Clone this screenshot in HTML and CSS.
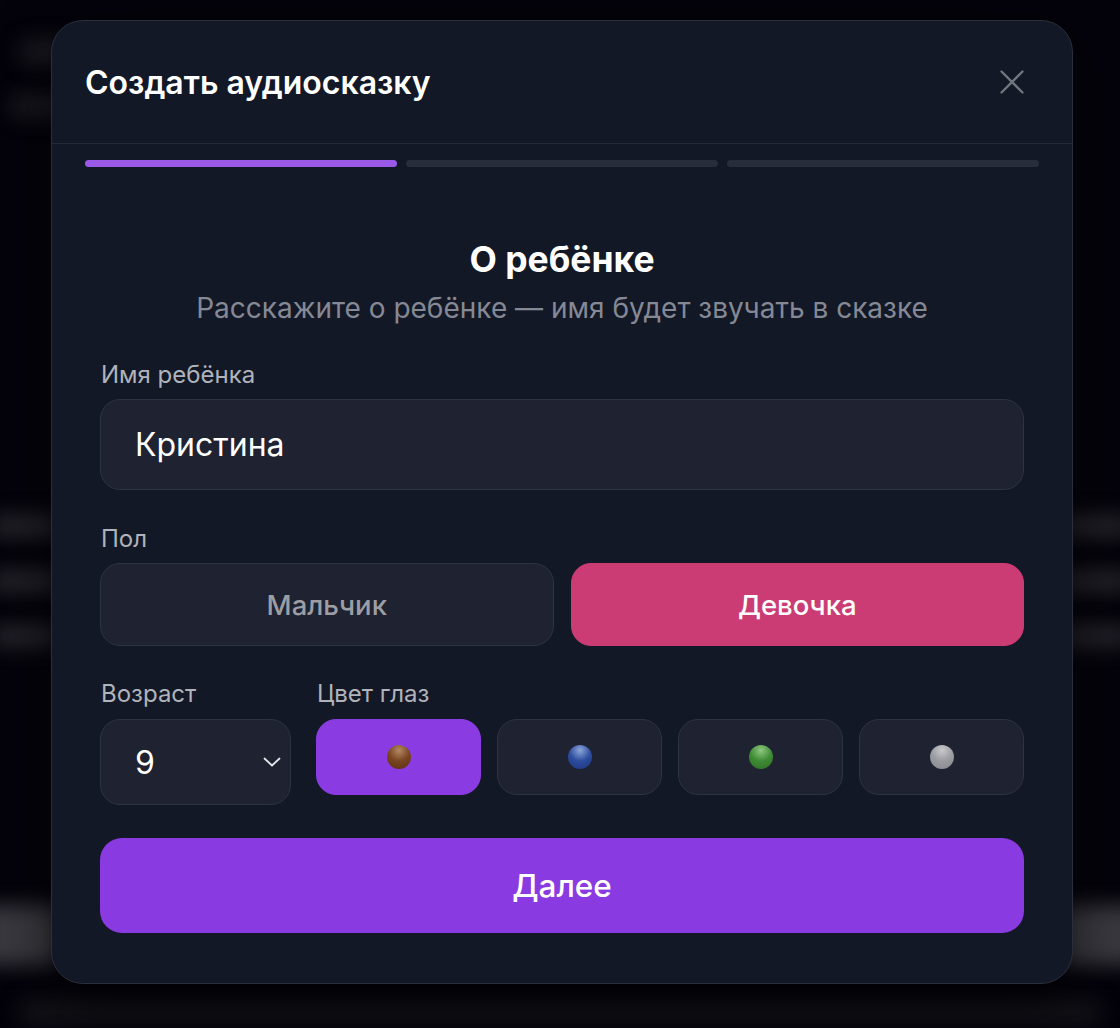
FILE: index.html
```html
<!DOCTYPE html>
<html lang="ru">
<head>
<meta charset="utf-8">
<title>Создать аудиосказку</title>
<link rel="stylesheet" href="styles.css">
</head>
<body>
<div class="backdrop" aria-hidden="true">
  <span class="blob b1"></span>
  <span class="blob b2"></span>
  <span class="blob b3"></span>
  <span class="blob b4"></span>
  <span class="blob b5"></span>
  <span class="blob b6"></span>
  <span class="blob b7"></span>
  <span class="blob b8"></span>
  <span class="blob b9"></span>
  <span class="blob b10"></span>
  <span class="blob b11"></span>
</div>

<div class="modal">
  <header class="modal-head">
    <h1 class="modal-title">Создать аудиосказку</h1>
    <button class="close" aria-label="Закрыть">
      <svg width="24" height="24" viewBox="0 0 24 24"><path d="M1.5 1.5 L22.5 22.5 M22.5 1.5 L1.5 22.5" stroke="#72767f" stroke-width="2.3" stroke-linecap="round" fill="none"/></svg>
    </button>
  </header>

  <div class="steps">
    <span class="step active"></span>
    <span class="step"></span>
    <span class="step"></span>
  </div>

  <div class="modal-body">
    <h2 class="section-title">О ребёнке</h2>
    <p class="section-sub">Расскажите о ребёнке — имя будет звучать в сказке</p>

    <label class="label label-name">Имя ребёнка</label>
    <div class="input">Кристина</div>

    <label class="label label-gender">Пол</label>
    <div class="gender">
      <button class="gender-btn">Мальчик</button>
      <button class="gender-btn selected">Девочка</button>
    </div>

    <div class="row">
      <div class="col-age">
        <label class="label">Возраст</label>
        <div class="select">
          <span>9</span>
          <svg width="18" height="10" viewBox="0 0 18 10"><path d="M1.5 1.5 L9 8.5 L16.5 1.5" stroke="#e6e7ea" stroke-width="1.8" fill="none" stroke-linecap="round" stroke-linejoin="round"/></svg>
        </div>
      </div>
      <div class="col-eyes">
        <label class="label">Цвет глаз</label>
        <div class="eyes">
          <button class="eye selected"><span class="dot brown"></span></button>
          <button class="eye"><span class="dot blue"></span></button>
          <button class="eye"><span class="dot green"></span></button>
          <button class="eye"><span class="dot gray"></span></button>
        </div>
      </div>
    </div>

    <button class="next">Далее</button>
  </div>
</div>
</body>
</html>
```

FILE: styles.css
```css
* { box-sizing: border-box; }

html, body {
  margin: 0;
  padding: 0;
}

body {
  background: #04030b;
  height: 1028px;
  font-family: Inter, "Noto Sans", sans-serif;
  display: flex;
  justify-content: center;
  align-items: flex-start;
  padding: 20px 0 0 4px;
  position: relative;
  overflow: hidden;
}

/* blurred page behind the dialog */
.backdrop {
  position: absolute;
  inset: 0;
  pointer-events: none;
}
.blob {
  position: absolute;
  display: block;
  border-radius: 10px;
  background: #26252c;
  filter: blur(10px);
}
.b1 { left: 20px; top: 40px; width: 60px; height: 24px; background: #1b1a21; }
.b2 { left: 10px; top: 95px; width: 70px; height: 22px; background: #1b1a21; }
.b3 { left: -10px; top: 515px; width: 70px; height: 22px; }
.b4 { left: -10px; top: 570px; width: 70px; height: 22px; }
.b5 { left: -10px; top: 625px; width: 70px; height: 22px; }
.b6 { right: -10px; top: 515px; width: 70px; height: 22px; }
.b7 { right: -10px; top: 570px; width: 70px; height: 22px; }
.b8 { right: -10px; top: 625px; width: 70px; height: 22px; }
.b9 { left: -20px; top: 905px; width: 80px; height: 60px; background: #3a3940; }
.b10 { right: -20px; top: 905px; width: 80px; height: 60px; background: #3a3940; }
.b11 { left: 20px; top: 1000px; width: 1080px; height: 24px; background: #141319; }

.modal {
  position: relative;
  width: 1022px;
  height: 964px;
  background: #131826;
  border: 1px solid #2a2f3b;
  border-radius: 32px;
  box-shadow: 0 20px 60px rgba(0, 0, 0, 0.6);
  display: flex;
  flex-direction: column;
}

.modal-head {
  height: 123px;
  padding: 0 48px 0 33px;
  display: flex;
  align-items: center;
  justify-content: space-between;
  border-bottom: 1px solid #242a36;
}

.modal-title {
  margin: 0;
  font-size: 32px;
  font-weight: 600;
  color: #ffffff;
}

.close {
  background: none;
  border: 0;
  padding: 0;
  width: 24px;
  height: 24px;
  display: flex;
}

.steps {
  display: flex;
  gap: 9px;
  padding: 16px 33px 0;
}
.step {
  flex: 1;
  height: 7px;
  border-radius: 4px;
  background: #272d3a;
}
.step.active { background: #9b59e8; }

.modal-body {
  padding: 0 48px;
  display: flex;
  flex-direction: column;
}

.section-title {
  margin: 73px 0 0;
  text-align: center;
  font-size: 35.5px;
  line-height: 40px;
  font-weight: 700;
  color: #ffffff;
}

.section-sub {
  margin: 12px 0 0;
  text-align: center;
  font-size: 28px;
  line-height: 32px;
  color: #858995;
}

.label {
  display: block;
  font-size: 24px;
  line-height: 28px;
  color: #b0b3bb;
  padding-left: 1px;
  margin-bottom: 10px;
}
.label-name { margin-top: 37px; }
.label-gender { margin-top: 35px; }

.input {
  height: 91px;
  background: #1f2331;
  border: 1.5px solid #2e3341;
  border-radius: 20px;
  padding: 0 34px;
  display: flex;
  align-items: center;
  font-size: 32px;
  color: #ffffff;
}

.gender {
  display: grid;
  grid-template-columns: 1fr 1fr;
  gap: 17px;
}
.gender-btn {
  height: 83px;
  border-radius: 20px;
  background: #1f2331;
  border: 1.5px solid #2e3341;
  font-family: Inter, sans-serif;
  font-size: 27.5px;
  font-weight: 500;
  color: #9c9ea4;
}
.gender-btn.selected {
  background: #cb3c75;
  border-color: #cb3c75;
  color: #ffffff;
}

.row {
  margin-top: 34px;
  display: grid;
  grid-template-columns: 191px 1fr;
  gap: 25px;
  align-items: start;
}
.row .label { margin-bottom: 11px; }

.select {
  height: 86px;
  background: #1f2331;
  border: 1.5px solid #2e3341;
  border-radius: 20px;
  padding: 0 9px 0 34px;
  display: flex;
  align-items: center;
  justify-content: space-between;
  font-size: 32px;
  color: #ffffff;
}

.eyes {
  display: grid;
  grid-template-columns: repeat(4, 1fr);
  gap: 16px;
}
.eye {
  height: 76px;
  border-radius: 20px;
  background: #1f2331;
  border: 1.5px solid #2e3341;
  display: flex;
  align-items: center;
  justify-content: center;
  padding: 0;
}
.eye.selected {
  background: #8a3ce2;
  border-color: #8a3ce2;
}

.dot {
  width: 24px;
  height: 24px;
  border-radius: 50%;
  display: block;
}
.dot.brown { background: radial-gradient(circle at 50% 22%, #b48866 0%, #7a4520 48%, #5a2f12 100%); }
.dot.blue  { background: radial-gradient(circle at 50% 22%, #8ea6d8 0%, #2d4d9f 48%, #1d3580 100%); }
.dot.green { background: radial-gradient(circle at 50% 22%, #8fc882 0%, #3f8c35 48%, #2f6e27 100%); }
.dot.gray  { background: radial-gradient(circle at 50% 22%, #c8c9cc 0%, #9a9ca1 48%, #86888d 100%); }

.next {
  margin-top: 33px;
  height: 95px;
  border: 0;
  border-radius: 22px;
  background: #8a3ae1;
  font-family: Inter, sans-serif;
  font-size: 31.5px;
  font-weight: 500;
  color: #ffffff;
}
```
